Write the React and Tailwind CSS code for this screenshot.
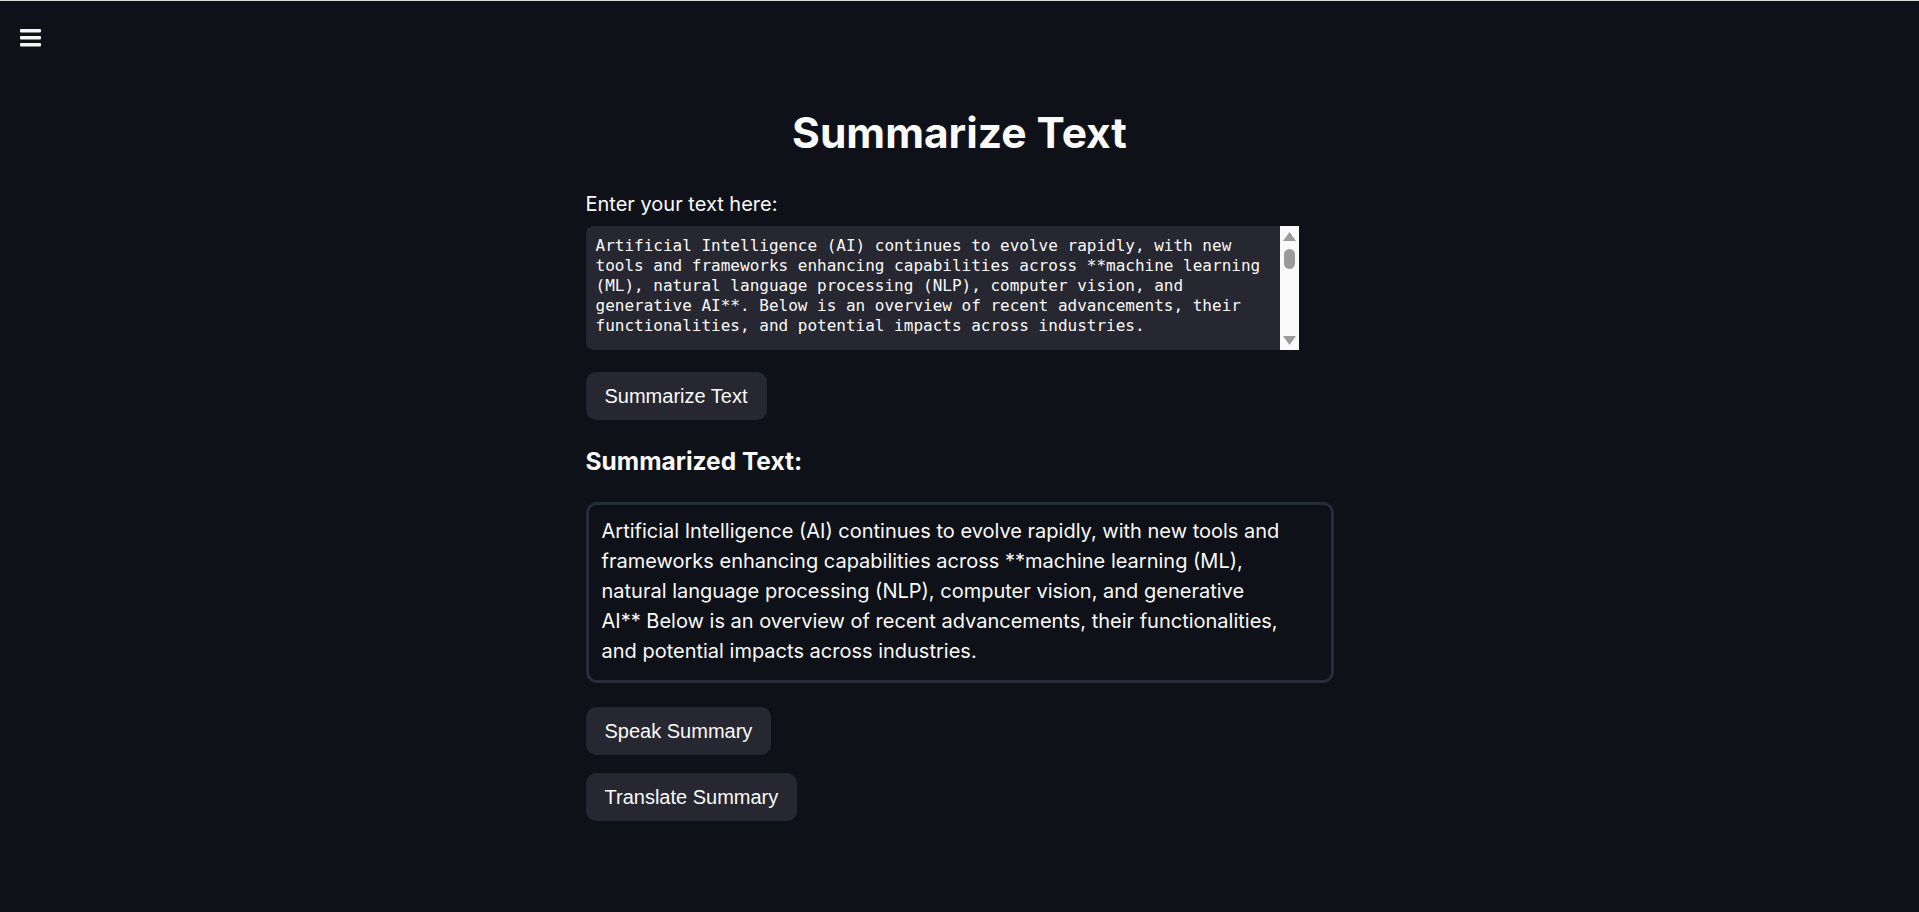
import React from "react";

const inputText =
  "Artificial Intelligence (AI) continues to evolve rapidly, with new tools and frameworks enhancing capabilities across **machine learning (ML), natural language processing (NLP), computer vision, and generative AI**. Below is an overview of recent advancements, their functionalities, and potential impacts across industries.";

const summaryLines = [
  "Artificial Intelligence (AI) continues to evolve rapidly, with new tools and",
  "frameworks enhancing capabilities across **machine learning (ML),",
  "natural language processing (NLP), computer vision, and generative",
  "AI** Below is an overview of recent advancements, their functionalities,",
  "and potential impacts across industries.",
];

const sans = { fontFamily: "Inter, 'Noto Sans', sans-serif" };

const Button = ({ children }) => (
  <button
    className="self-start h-[48px] px-[19px] rounded-[10px] bg-[#262730] text-[#fafafa] text-[20px] leading-none"
    style={{ fontFamily: "'Liberation Sans', Arial, sans-serif" }}
  >
    {children}
  </button>
);

const FakeScrollbar = () => (
  <div className="absolute right-0 top-0 bottom-0 w-[19px] bg-[#fafafa] flex flex-col items-center">
    <svg width="13" height="9" viewBox="0 0 13 9" className="mt-[6px]">
      <path d="M6.5 0 L13 9 L0 9 Z" fill="#9a9a9a" />
    </svg>
    <div className="mt-[8px] w-[11px] h-[20px] rounded-full bg-[#9a9a9a]" />
    <div className="flex-1" />
    <svg width="13" height="9" viewBox="0 0 13 9" className="mb-[5px]">
      <path d="M0 0 L13 0 L6.5 9 Z" fill="#9a9a9a" />
    </svg>
  </div>
);

export default function App() {
  return (
    <div className="min-h-screen bg-[#0e1117] border-t border-[#dcdcdc] text-[#fafafa]" style={sans}>
      <div className="pt-[28px] pl-[20px]">
        <svg width="21" height="18" viewBox="0 0 21 18">
          <rect x="0" y="0" width="21" height="3.5" rx="1" fill="#f5f5f5" />
          <rect x="0" y="7" width="21" height="3.5" rx="1" fill="#f5f5f5" />
          <rect x="0" y="14" width="21" height="3.5" rx="1" fill="#f5f5f5" />
        </svg>
      </div>

      <div className="w-[748px] mx-auto flex flex-col">
        <h1 className="mt-[60px] text-center text-[42.5px] leading-[52px] font-bold">Summarize Text</h1>

        <label className="mt-[33px] text-[20px] leading-[25px]">Enter your text here:</label>

        <div className="relative mt-[9px] w-[713px] h-[124px] rounded-l-[8px] bg-[#262730] overflow-hidden">
          <textarea
            readOnly
            value={inputText}
            className="w-full h-full resize-none overflow-hidden bg-transparent outline-none text-[#fafafa] text-[16px] leading-[20px] pl-[10px] pr-[20px] pt-[10px]"
            style={{ fontFamily: "'DejaVu Sans Mono', monospace" }}
          />
          <FakeScrollbar />
        </div>

        <div className="mt-[22px] flex">
          <Button>Summarize Text</Button>
        </div>

        <h3 className="mt-[26px] text-[24.5px] leading-[30px] font-bold">Summarized Text:</h3>

        <div className="mt-[26px] border-[3px] border-[#262c3c] rounded-[11px] pl-[13px] pr-[10px] pt-[11px] pb-[14px] text-[20px] leading-[30px]">
          {summaryLines.map((l) => (
            <div key={l}>{l}</div>
          ))}
        </div>

        <div className="mt-[24px] flex flex-col gap-[18px]">
          <Button>Speak Summary</Button>
          <Button>Translate Summary</Button>
        </div>
      </div>
    </div>
  );
}
